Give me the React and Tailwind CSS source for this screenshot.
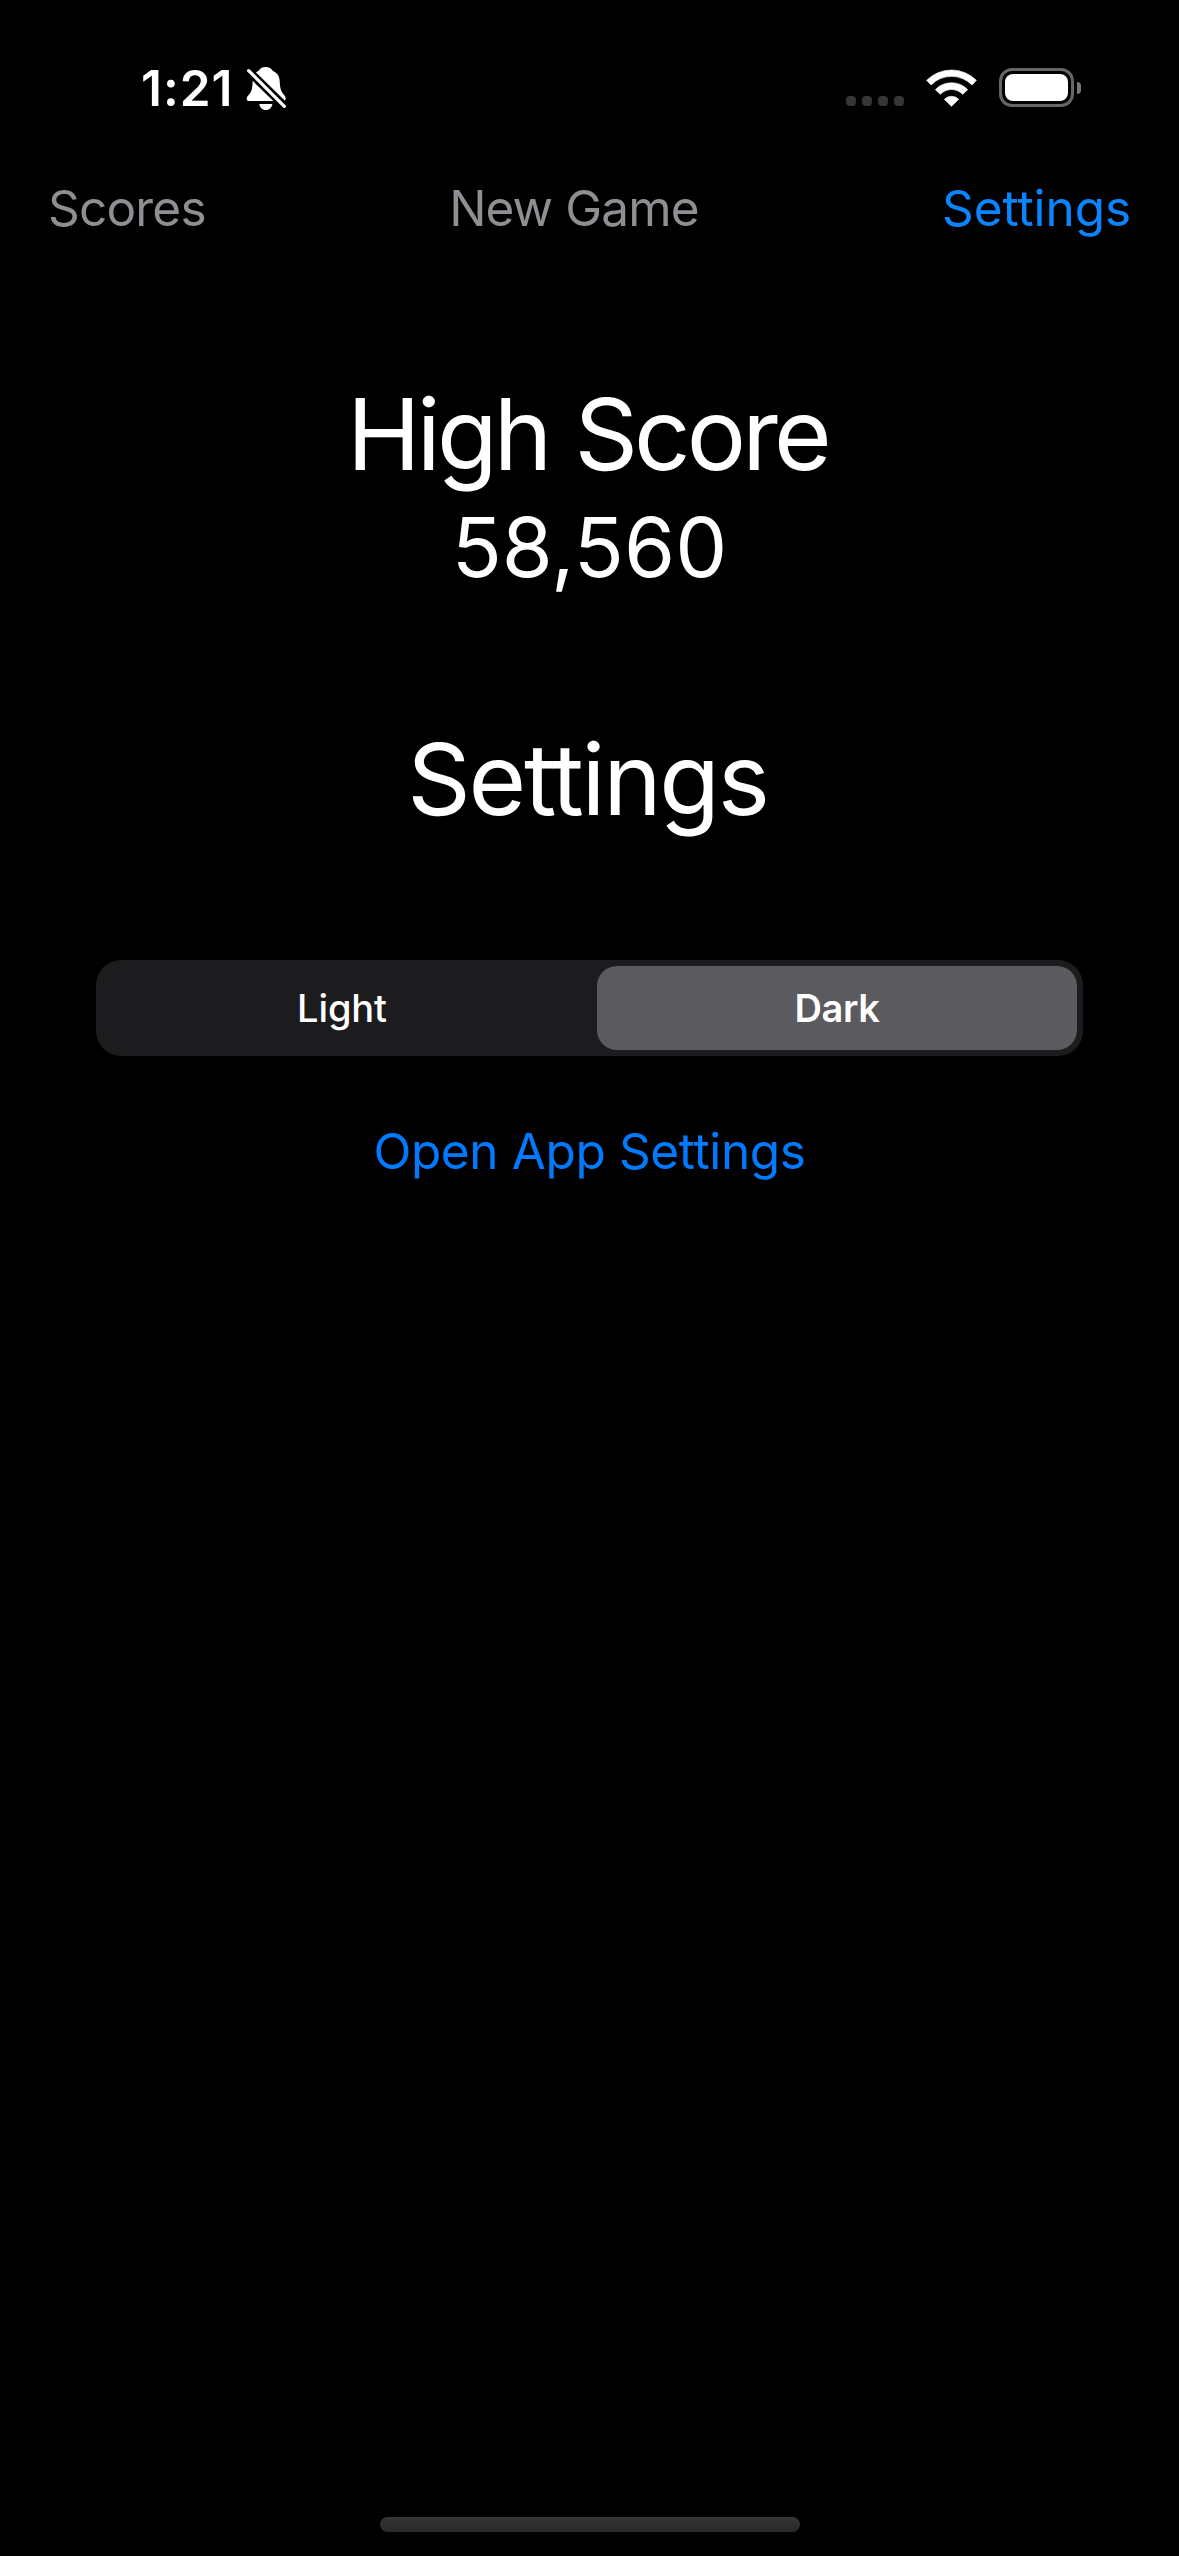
import React from "react";

function BellSlash() {
  return (
    <svg className="h-[44px] w-[41px]" viewBox="378 48 123 132" aria-hidden="true">
      <path
        fill="#fff"
        d="M437 51C447 51 455 56 459 63C472 69 478 78 479 92C480 116 483 124 492 134C496 139 497 142 497 146C497 151 494 153 489 153H388C383 153 380 150 380 146C380 142 382 139 386 135C394 126 397 118 398 95C398 79 403 69 415 63C419 56 427 51 437 51Z"
      />
      <path fill="#fff" d="M418 162H457C456 172 449 180 437.500 180C426 180 419 172 418 162Z" />
      <path stroke="#000" strokeWidth="25" d="M365 43L514 188" />
      <path stroke="#fff" strokeWidth="10" strokeLinecap="round" d="M386 62L493 169" />
    </svg>
  );
}

function Wifi() {
  return (
    <svg className="h-[38px] w-[51px]" viewBox="288 55 153 114" aria-hidden="true">
      <g fill="#fff" stroke="#fff" strokeWidth="2" strokeLinejoin="round">
        <path d="M290 89A105 105 0 0 1 439 89L426 103A86 86 0 0 0 303 103Z" />
        <path d="M316 117A67 67 0 0 1 413 117L398 131A46 46 0 0 0 331 131Z" />
        <path d="M343 146A30 30 0 0 1 386 146L364.500 167Z" />
      </g>
    </svg>
  );
}

function Battery() {
  return (
    <div className="flex items-center gap-[3px] pb-px">
      <div className="flex h-[39px] w-[75px] rounded-[13px] border-[3px] border-[#666] p-[3px]">
        <div className="flex-1 rounded-[8px] bg-white" />
      </div>
      <div className="h-3 w-1 rounded-r-full bg-[#777]" />
    </div>
  );
}

function StatusBar() {
  return (
    <div className="flex h-[176px] items-center justify-between pr-[98px] pl-[141px]">
      <div className="flex items-center gap-3">
        <span className="text-[49.5px] leading-[60px] font-semibold tracking-[1px]">1:21</span>
        <BellSlash />
      </div>
      <div className="flex items-center">
        <div className="flex h-9 items-end gap-1.5">
          {[0, 1, 2, 3].map((dot) => (
            <span key={dot} className="size-2.5 rounded-[4px] bg-[#363636]" />
          ))}
        </div>
        <div className="mr-[22px] ml-[22px] pb-px">
          <Wifi />
        </div>
        <Battery />
      </div>
    </div>
  );
}

export default function App() {
  return (
    <div className="flex h-[2556px] w-[1179px] flex-col overflow-hidden bg-black font-['Inter',sans-serif] text-white">
      <StatusBar />
      <nav className="flex h-16 items-center justify-between px-12 text-[49.5px] leading-[60px] text-[#8e8e93]">
        <button className="tracking-[-0.8px]">Scores</button>
        <button className="tracking-[-0.9px]">New Game</button>
        <button className="tracking-[-0.07px] text-[#0a84ff]">Settings</button>
      </nav>
      <main className="flex flex-1 flex-col items-center">
        <h1 className="mt-[134px] pr-1 text-[99px] leading-[120px] tracking-[-3.85px] [word-spacing:2px]">
          High Score
        </h1>
        <p className="text-[82.5px] leading-[106px] tracking-[0.07px]">58,560</p>
        <h2 className="mt-[119px] pr-1 text-[99px] leading-[120px] tracking-[-2.34px]">Settings</h2>
        <div className="mt-[121px] flex h-24 w-[987px] justify-between rounded-[25px] bg-[#1c1c1e] p-1.5 text-[38px]">
          <button className="w-[480px] rounded-[20px] font-medium tracking-[-0.09px]">Light</button>
          <button className="w-[480px] rounded-[20px] bg-[#5b5a5f] font-semibold tracking-[-0.4px]">Dark</button>
        </div>
        <button className="mt-[65px] text-[49.5px] leading-[60px] tracking-[-0.37px] text-[#007aff]">
          Open App Settings
        </button>
      </main>
      <div className="mb-6 h-[15px] w-[420px] self-center rounded-full bg-linear-to-b from-[#353535] to-[#292929]" />
    </div>
  );
}
